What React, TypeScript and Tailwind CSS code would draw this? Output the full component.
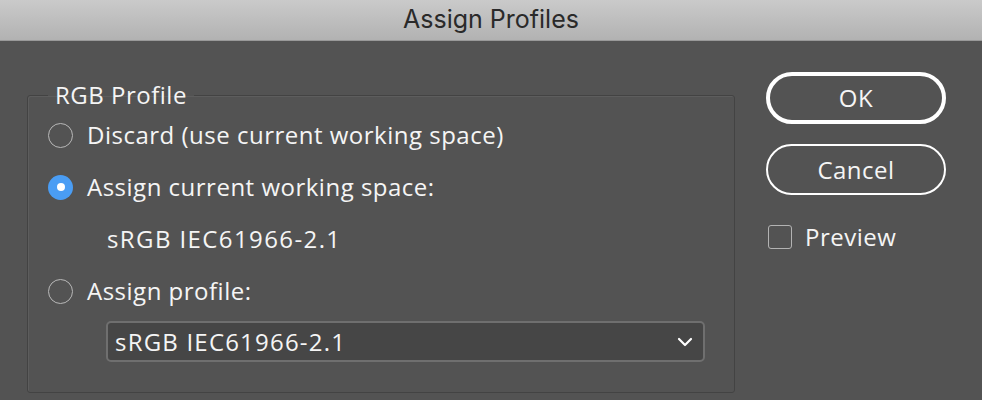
import React, { useState } from 'react'

type ProfileChoice = 'discard' | 'working' | 'profile'

const Radio = ({ checked }: { checked: boolean }) =>
  checked ? (
    <span className="flex h-[25px] w-[25px] shrink-0 items-center justify-center rounded-full bg-[#4a9df4]">
      <span className="h-[8px] w-[8px] rounded-full bg-white"></span>
    </span>
  ) : (
    <span className="h-[25px] w-[25px] shrink-0 rounded-full border-[1.5px] border-[#b8b8b8]"></span>
  )

export default function App() {
  const [choice, setChoice] = useState<ProfileChoice>('working')
  const [preview, setPreview] = useState(false)

  const font = "font-['Open_Sans','Liberation_Sans',sans-serif]"

  return (
    <div className={`flex h-[400px] w-[982px] flex-col overflow-hidden bg-[#535353] text-[24px] tracking-[0.5px] text-[#f5f5f5] ${font}`}>
      <div className="flex h-[41px] shrink-0 items-center justify-center border-b border-[#999999] bg-gradient-to-b from-[#cacaca] to-[#b2b2b2]">
        <span className="font-['Inter',sans-serif] text-[25px] tracking-normal text-[#2a2a2a]">Assign Profiles</span>
      </div>

      <div className="flex pl-[27px]">
        <fieldset className="mt-[40px] h-[312px] w-[708px] rounded-[3px] border border-[#434343] pl-[20px] shadow-[inset_1px_1px_0_#5d5d5d]">
          <legend className="px-[7px] leading-[28px]">RGB Profile</legend>

          <div className="flex flex-col">
            <label className="flex h-[52px] items-center gap-[14px]" onClick={() => setChoice('discard')}>
              <Radio checked={choice === 'discard'} />
              <span>Discard (use current working space)</span>
            </label>
            <label className="flex h-[52px] items-center gap-[14px]" onClick={() => setChoice('working')}>
              <Radio checked={choice === 'working'} />
              <span>Assign current working space:</span>
            </label>
            <div className="flex h-[52px] items-center pl-[59px] tracking-[1.4px]">sRGB IEC61966-2.1</div>
            <label className="flex h-[52px] items-center gap-[14px]" onClick={() => setChoice('profile')}>
              <Radio checked={choice === 'profile'} />
              <span>Assign profile:</span>
            </label>
            <div className="ml-[58px] mt-[4px] flex h-[41px] w-[599px] items-center justify-between rounded-[5px] border-2 border-[#6f6f6f] bg-[#464646] pl-[7px] pr-[10px]">
              <span className="tracking-[1.2px]">sRGB IEC61966-2.1</span>
              <svg width="16" height="10" viewBox="0 0 16 10" fill="none">
                <path d="M2 2l6 6 6-6" stroke="#ffffff" strokeWidth="2.2" strokeLinecap="round" strokeLinejoin="round" />
              </svg>
            </div>
          </div>
        </fieldset>

        <div className="ml-[31px] flex flex-col pt-[31px]">
          <button className="h-[52px] w-[180px] rounded-full border-4 border-white text-center">OK</button>
          <button className="mt-[20px] h-[51px] w-[180px] rounded-full border-2 border-white text-center">Cancel</button>
          <label className="ml-[2px] mt-[24px] flex items-center gap-[13px]" onClick={() => setPreview(!preview)}>
            <span className="h-[24px] w-[24px] rounded-[3px] border-[1.5px] border-[#b3b3b3]"></span>
            <span>Preview</span>
          </label>
        </div>
      </div>
    </div>
  )
}
